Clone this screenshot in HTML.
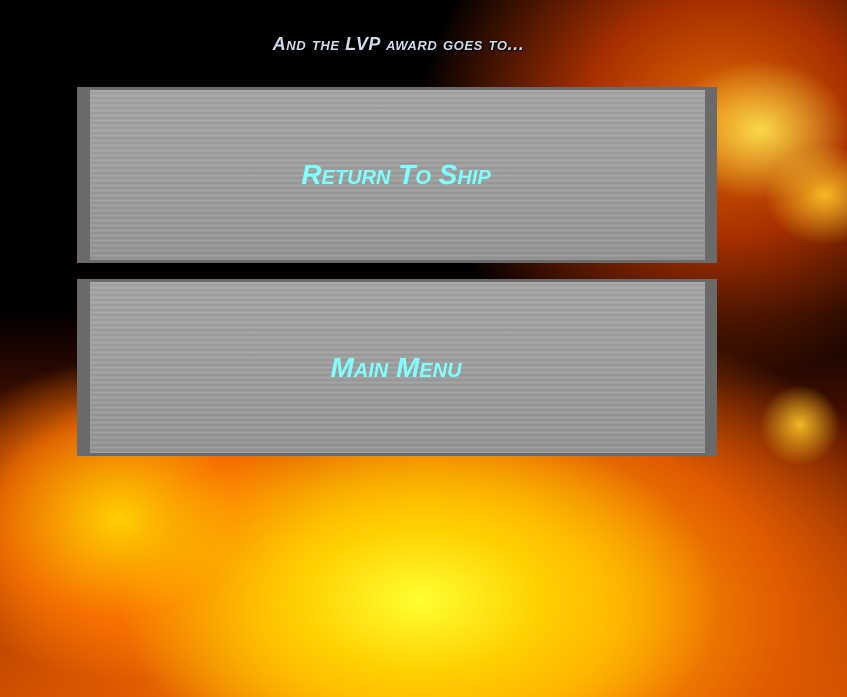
<!DOCTYPE html>
<html><head><style>
html,body{margin:0;padding:0}
body{width:847px;height:697px;overflow:hidden;position:relative;font-family:"Liberation Sans",sans-serif;
background:
radial-gradient(ellipse 90px 70px at 760px 130px,rgba(255,230,80,.9),rgba(255,150,0,0) 100%),
radial-gradient(ellipse 60px 50px at 825px 195px,rgba(255,200,40,.9),rgba(255,120,0,0) 100%),
radial-gradient(ellipse 40px 40px at 800px 425px,rgba(255,200,40,.9),rgba(255,120,0,0) 100%),
radial-gradient(ellipse 300px 180px at 420px 600px,#ffff30 0%,#ffd000 40%,rgba(255,140,0,0) 100%),
radial-gradient(ellipse 200px 160px at 120px 520px,#ffd000 0%,rgba(255,120,0,.8) 60%,rgba(200,60,0,0) 100%),
radial-gradient(ellipse 520px 320px at 450px 620px,#ff9a00 30%,#e05a00 65%,rgba(80,10,0,0) 100%),
radial-gradient(ellipse 300px 260px at 720px 120px,#e06a00 0%,#a83000 45%,rgba(40,0,0,0) 100%),
linear-gradient(#000,#050000 45%,#5a1400 65%,#c84a00);}
.t{position:absolute;left:0;width:797px;top:34px;text-align:center;font-size:18px;letter-spacing:0.6px;font-weight:bold;font-style:italic;font-variant:small-caps;color:#d0dcec;text-shadow:1px 1px 1px #000,-1px 0 1px #000}
.b{position:absolute;left:77px;width:640px;height:176px;background:#6a6a6a}
.b .i{position:absolute;left:13px;right:12px;top:3px;bottom:3px;
background:repeating-linear-gradient(rgba(255,255,255,.06) 0 1px,rgba(0,0,0,0) 1px 2px,rgba(0,0,0,.05) 2px 4px,rgba(255,255,255,0) 4px 5px),linear-gradient(#a6a6a6,#a0a0a0 50%,#979797);}
.b span{position:absolute;left:0;right:0;top:0;bottom:0;display:flex;align-items:center;justify-content:center;font-size:28px;font-weight:bold;font-style:italic;font-variant:small-caps;color:#80ffff;padding-right:2px}
</style></head><body>
<div class="t">And the LVP award goes to...</div>
<div class="b" style="top:87px"><div class="i"></div><span>Return To Ship</span></div>
<div class="b" style="top:279px;height:177px"><div class="i"></div><span>Main Menu</span></div>
</body></html>
